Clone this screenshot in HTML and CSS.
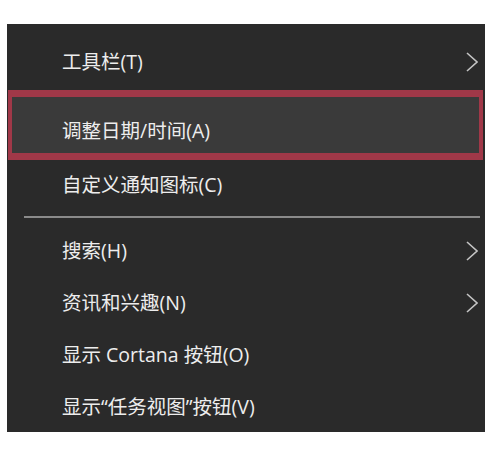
FILE: index.html
```html
<!DOCTYPE html>
<html lang="zh-CN">
<head>
<meta charset="utf-8">
<title>任务栏菜单</title>
<link rel="stylesheet" href="styles.css">
</head>
<body>
<div class="menu">
  <div class="item first"><span class="label">工具栏(T)</span><svg class="chev" viewBox="0 0 12 20" width="12" height="20"><polyline points="1,1 11,10 1,19"/></svg></div>
  <div class="item selected"><span class="label">调整日期/时间(A)</span></div>
  <div class="item third"><span class="label">自定义通知图标(C)</span></div>
  <div class="sep"></div>
  <div class="item"><span class="label">搜索(H)</span><svg class="chev" viewBox="0 0 12 20" width="12" height="20"><polyline points="1,1 11,10 1,19"/></svg></div>
  <div class="item"><span class="label">资讯和兴趣(N)</span><svg class="chev" viewBox="0 0 12 20" width="12" height="20"><polyline points="1,1 11,10 1,19"/></svg></div>
  <div class="item"><span class="label">显示 Cortana 按钮(O)</span></div>
  <div class="item"><span class="label">显示“任务视图”按钮(V)</span></div>
</div>
</body>
</html>
```

FILE: styles.css
```css
html, body {
  margin: 0;
  padding: 0;
  background: #ffffff;
}
body {
  padding: 24px 7px 0 7px;
  font-family: "Open Sans", "Noto Sans CJK SC", sans-serif;
}
.menu {
  width: 478px;
  height: 408px;
  box-sizing: border-box;
  background: #2a2a2a;
  overflow: hidden;
  display: flex;
  flex-direction: column;
}
.item {
  flex: none;
  height: 52px;
  box-sizing: border-box;
  display: flex;
  align-items: center;
  justify-content: space-between;
  padding: 0 7px 0 55px;
  color: #ededed;
  font-size: 19.5px;
  font-weight: 400;
  line-height: 1;
}
.item.first {
  height: 66px;
  padding-top: 10px;
}
.item.selected {
  height: 70px;
  margin: 0 2px 0 1px;
  padding: 12px 4px 0 50px;
  background: #3a3a3a;
  border-style: solid;
  border-color: #a03848;
  border-width: 7px 4px;
}
.item.third {
  height: 50px;
}
.sep {
  flex: none;
  height: 2px;
  margin: 6px 5px 7px 17px;
  background: #8a8a8a;
}
.chev {
  display: block;
  flex: none;
}
.chev polyline {
  fill: none;
  stroke: #c4c4c4;
  stroke-width: 1.6;
}
```
